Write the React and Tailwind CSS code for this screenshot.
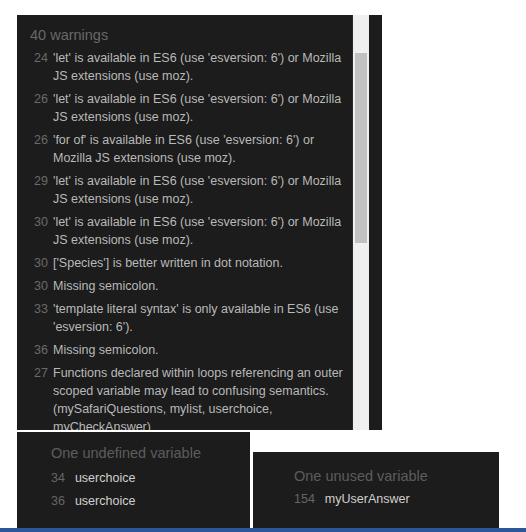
import React from "react";

const warnings = [
  { line: 24, text: "'let' is available in ES6 (use 'esversion: 6') or Mozilla JS extensions (use moz)." },
  { line: 26, text: "'let' is available in ES6 (use 'esversion: 6') or Mozilla JS extensions (use moz)." },
  { line: 26, text: "'for of' is available in ES6 (use 'esversion: 6') or Mozilla JS extensions (use moz)." },
  { line: 29, text: "'let' is available in ES6 (use 'esversion: 6') or Mozilla JS extensions (use moz)." },
  { line: 30, text: "'let' is available in ES6 (use 'esversion: 6') or Mozilla JS extensions (use moz)." },
  { line: 30, text: "['Species'] is better written in dot notation." },
  { line: 30, text: "Missing semicolon." },
  { line: 33, text: "'template literal syntax' is only available in ES6 (use 'esversion: 6')." },
  { line: 36, text: "Missing semicolon." },
  {
    line: 27,
    text: "Functions declared within loops referencing an outer scoped variable may lead to confusing semantics. (mySafariQuestions, mylist, userchoice, myCheckAnswer)",
  },
];

const font = { fontFamily: '"Liberation Sans", Arial, sans-serif' };

const App = () => {
  return (
    <div className="w-[526px] h-[532px] bg-white overflow-hidden flex flex-col" style={font}>
      <div className="flex ml-[17px] mt-[15px] h-[415px]">
        <div className="w-[335px] h-full bg-[#1c1c1c] overflow-hidden pt-[10px]">
          <div className="pl-[13px] text-[14.5px] leading-[20px] text-[#686868]">40 warnings</div>
          <div className="mt-[4px] flex flex-col gap-[5px]">
            {warnings.map((w, i) => (
              <div key={i} className="flex text-[12.5px] leading-[18px]">
                <span className="w-[31px] shrink-0 text-right text-[#6a6a6a]">{w.line}</span>
                <span className="ml-[5px] w-[295px] text-[#b9b9b9]">{w.text}</span>
              </div>
            ))}
          </div>
        </div>
        <div className="w-[17px] h-full bg-[#f0f0f0] border-l border-[#2a2a2a] pt-[38px] pl-[2px]">
          <div className="w-[12px] h-[190px] bg-[#c1c1c1]" />
        </div>
        <div className="w-[13px] h-full bg-[#1c1c1c]" />
      </div>
      <div className="flex ml-[17px] mt-[2px] h-[96px]">
        <div className="w-[233px] h-full bg-[#1c1c1c] pl-[34px] pt-[11px]">
          <div className="text-[14.5px] leading-[20px] text-[#5c5c5c]">One undefined variable</div>
          <div className="mt-[6px] flex flex-col gap-[5px] text-[12.5px] leading-[18px]">
            <div className="flex gap-[10px]">
              <span className="text-[#666666]">34</span>
              <span className="text-[#d0d0d0]">userchoice</span>
            </div>
            <div className="flex gap-[10px]">
              <span className="text-[#666666]">36</span>
              <span className="text-[#d0d0d0]">userchoice</span>
            </div>
          </div>
        </div>
        <div className="w-[246px] h-[76px] mt-[20px] ml-[3px] bg-[#1c1c1c] pl-[41px] pt-[14px]">
          <div className="text-[14.5px] leading-[20px] text-[#5c5c5c]">One unused variable</div>
          <div className="mt-[4px] flex gap-[10px] text-[12.5px] leading-[18px]">
            <span className="text-[#666666]">154</span>
            <span className="text-[#d0d0d0]">myUserAnswer</span>
          </div>
        </div>
      </div>
      <div className="h-[4px] w-full bg-[#2b579a]" />
    </div>
  );
};

export default App;
